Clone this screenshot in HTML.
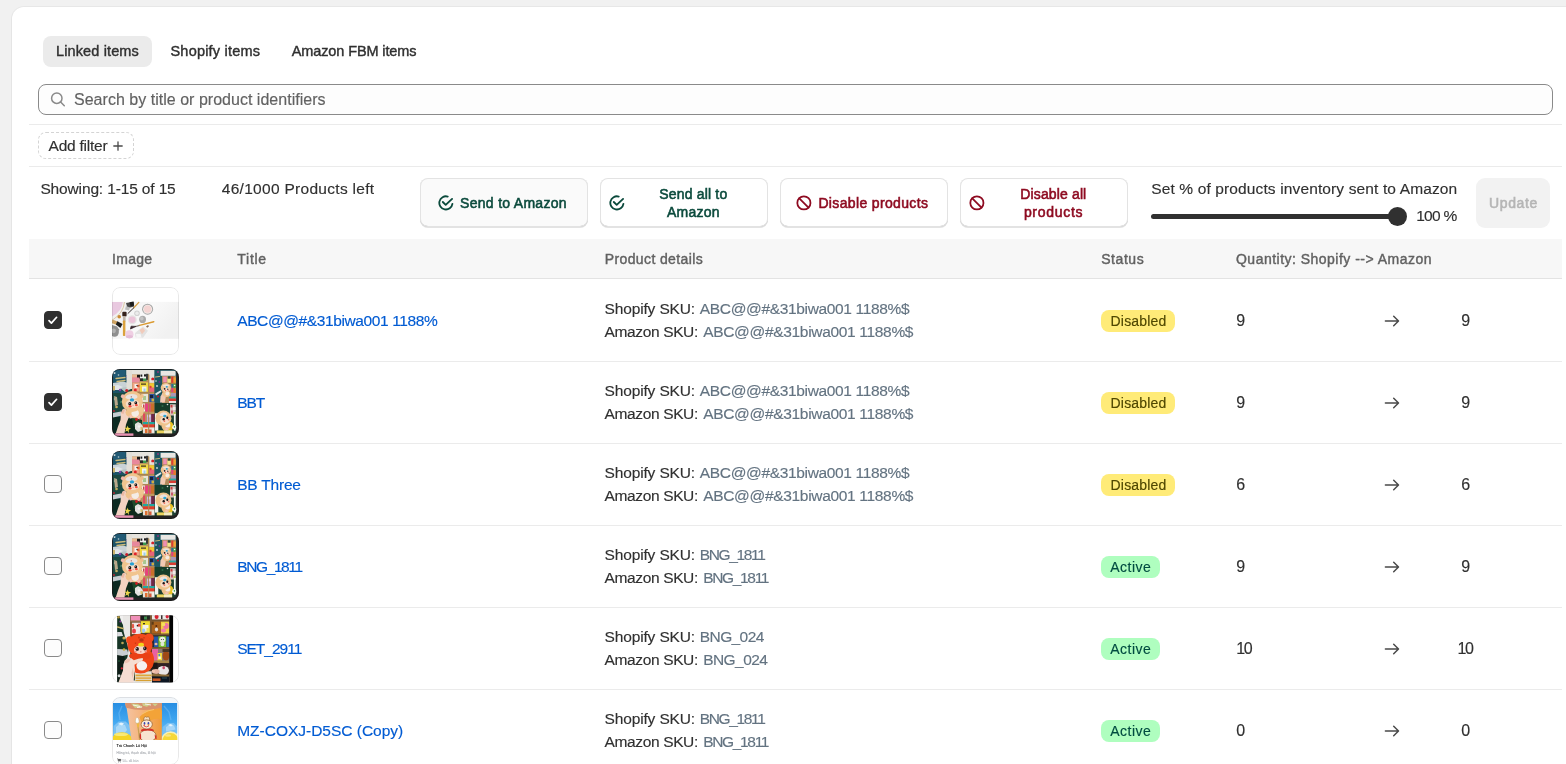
<!DOCTYPE html>
<html lang="en">
<head>
<meta charset="utf-8">
<title>Linked items</title>
<style>
*{box-sizing:border-box;margin:0;padding:0}
html,body{width:1566px;height:764px;overflow:hidden;background:#f1f1f1}
body{font-family:"Liberation Sans",sans-serif;font-size:14px;color:#303030;position:relative}
.wrap{position:absolute;left:0;top:0;width:1566px;height:764px;will-change:transform}
.abs{position:absolute;white-space:nowrap}
.card{position:absolute;left:12px;top:7px;width:1600px;height:800px;background:#fff;border-radius:12px;box-shadow:0 0 0 1px rgba(0,0,0,.04),0 1px 2px rgba(0,0,0,.06)}
.t{position:absolute;white-space:nowrap;line-height:20px;height:20px;-webkit-text-stroke:.15px currentColor}
.med{-webkit-text-stroke:.4px currentColor}
.sb{-webkit-text-stroke:.55px currentColor}
.tab{position:absolute;top:36px;height:31px;border-radius:8px}
.tab.sel{background:#ebebeb}
.hr{position:absolute;left:29px;width:1533px;height:1px;background:#ebebeb}
.search{position:absolute;left:38px;top:84px;width:1515px;height:31px;border:1px solid #8a8a8a;border-radius:8px;background:#fdfdfd}
.addf{position:absolute;left:38px;top:132px;width:96px;height:27px;border:1px dashed #d4d4d4;border-radius:8px}
.btn{position:absolute;top:178px;height:49px;width:168px;border-radius:8px;background:#fff;box-shadow:0 0 0 1px #e3e3e3 inset,0 -1px 0 0 #b5b5b5 inset,0 1px 0 0 #e3e3e3}
.btn.hov{background:#fafafa}
.upd{position:absolute;left:1476px;top:178px;width:74px;height:50px;border-radius:9px;background:#f2f2f2}
.track{position:absolute;left:1151px;top:213.5px;width:248px;height:5px;border-radius:3px;background:#303030}
.knob{position:absolute;left:1388px;top:206.5px;width:19px;height:19px;border-radius:50%;background:#303030}
.thead{position:absolute;left:29px;top:239px;width:1533px;height:40px;background:#f7f7f7;border-bottom:1px solid #e3e3e3}
.row{position:absolute;left:29px;width:1533px;height:82px;border-bottom:1px solid #ebebeb}
.cb{position:absolute;left:44px;width:18px;height:18px;border-radius:4px;border:1px solid #8a8a8a;background:#fdfdfd}
.cb.on{background:#303030;border-color:#303030}
.cb svg{position:absolute;left:-1px;top:-1px}
.thumb{position:absolute;left:112px;width:67px;height:68px;border-radius:8px;overflow:hidden;background:#fff}
.thumb svg{position:absolute;left:0;top:0}
.thumb::after{content:"";position:absolute;left:0;top:0;right:0;bottom:0;border:1px solid rgba(0,0,0,.09);border-radius:8px}
.thumb.collage::after{border-color:rgba(0,0,0,.25)}
.badge{position:absolute;left:1101px;height:22px;border-radius:8px}
.badge.dis{background:#ffeb78;width:74px}
.badge.act{background:#affebf;width:59px}
</style>
</head>
<body>
<div class="wrap">
<svg width="0" height="0" style="position:absolute"><defs><filter id="blur" x="-5%" y="-5%" width="110%" height="110%"><feGaussianBlur stdDeviation=".55"/></filter><filter id="blur2" x="-5%" y="-5%" width="110%" height="110%"><feGaussianBlur stdDeviation=".35"/></filter><clipPath id="clipA"><rect x=".8" y=".8" width="63.600" height="63.800" rx="3.500"/></clipPath><clipPath id="clipR"><rect x="5.100" y=".2" width="56.200" height="67.300" rx="1"/></clipPath></defs></svg>
<div class="card"></div>
<div class="tab sel" style="left:43px;width:109px"></div>
<div class="search"></div>
<svg class="abs" style="left:49px;top:90px" width="18" height="18" viewBox="0 0 18 18"><circle cx="7.8" cy="8.2" r="5.2" fill="none" stroke="#8a8a8a" stroke-width="1.5"/><path d="M11.6 12L15.3 15.8" stroke="#8a8a8a" stroke-width="1.5" stroke-linecap="round"/></svg>
<div class="hr" style="top:124px"></div>
<div class="addf"></div>
<svg class="abs" style="left:113px;top:141px" width="10" height="10" viewBox="0 0 10 10"><path d="M5 .8v8.4M.8 5h8.4" stroke="#4a4a4a" stroke-width="1.3" stroke-linecap="round"/></svg>
<div class="hr" style="top:166px"></div>
<div class="btn hov" style="left:420px"></div>
<div class="btn" style="left:600px"></div>
<div class="btn" style="left:780px"></div>
<div class="btn" style="left:960px"></div>
<svg class="abs" style="left:438px;top:195px" width="15.8" height="15.800" viewBox="0 0 24 24" fill="none" stroke="#0b4a3c" stroke-width="2.800" stroke-linecap="round" stroke-linejoin="round"><path d="M21.900 13.390A10 10 0 1 1 14.760 2.390"/><path d="M7.300 10.600L11.700 15 21.400 5.900"/></svg>
<svg class="abs" style="left:609px;top:195px" width="15.8" height="15.800" viewBox="0 0 24 24" fill="none" stroke="#0b4a3c" stroke-width="2.800" stroke-linecap="round" stroke-linejoin="round"><path d="M21.900 13.390A10 10 0 1 1 14.760 2.390"/><path d="M7.300 10.600L11.700 15 21.400 5.900"/></svg>
<svg class="abs" style="left:796.1px;top:195px" width="15.8" height="15.800" viewBox="0 0 24 24" fill="none" stroke="#8e0b21" stroke-width="2.700" stroke-linecap="round" stroke-linejoin="round"><circle cx="12" cy="12" r="10"/><path d="M5 5l14 14"/></svg>
<svg class="abs" style="left:969.2px;top:195px" width="15.8" height="15.800" viewBox="0 0 24 24" fill="none" stroke="#8e0b21" stroke-width="2.700" stroke-linecap="round" stroke-linejoin="round"><circle cx="12" cy="12" r="10"/><path d="M5 5l14 14"/></svg>
<div class="track"></div><div class="knob"></div>
<div class="upd"></div>
<div class="thead"></div>

<div class="row" style="top:280px"></div>
<div class="cb on" style="top:311px"><svg width="18" height="18" viewBox="0 0 18 18"><path d="M5 9.600l2.400 2.500 5.200-5.800" fill="none" stroke="#fff" stroke-width="1.7" stroke-linecap="round" stroke-linejoin="round"/></svg></div>
<div class="thumb makeup" style="top:287px"><svg width="67" height="68" viewBox="0 0 67 68"><defs><linearGradient id="mkbg" x1="0" y1="0" x2="1" y2=".4"><stop offset="0" stop-color="#ededed"/><stop offset=".55" stop-color="#f9f9f9"/><stop offset="1" stop-color="#f1f1f1"/></linearGradient></defs><rect width="67" height="68" fill="#fff"/><rect x="0" y="14.900" width="67" height="36.900" fill="url(#mkbg)"/><g filter="url(#blur2)"><path d="M0 14.900h10.800q-.5 9-10.800 14.500z" fill="#e9c9e0"/><path d="M12.500 15q-1 11-12 18" fill="none" stroke="#dcc3a0" stroke-width=".9"/><path d="M14 16l7.500-1.200.7 4.800-6.700 1.600z" fill="#4a4a4a"/><path d="M17.500 15.200l4-.6.600 4-3.600.9z" fill="#1f1f1f"/><path d="M14 19l4 1.500-1 3-4-1z" fill="#bdbdbd"/><path d="M26.800 15.400L21.800 20.800" stroke="#d9a24a" stroke-width="1.300" stroke-linecap="round"/><path d="M21.800 20.800L16 26.400" stroke="#3a3030" stroke-width="1" stroke-linecap="round"/><circle cx="35.600" cy="22.200" r="5.500" fill="#a5a5a5"/><circle cx="35.600" cy="22.200" r="4.500" fill="#f3ece9"/><circle cx="35.600" cy="22.200" r="3.600" fill="#f4d4d2"/><circle cx="25" cy="26.300" r="2.800" fill="#d2d2d2"/><circle cx="25" cy="26.300" r="1.700" fill="#ececec"/><circle cx="20.200" cy="32.800" r="4.500" fill="#e6e3e3"/><circle cx="20.200" cy="32.800" r="3.300" fill="#ecc4d9"/><ellipse cx="30.600" cy="32.400" rx="3.400" ry="3.700" fill="#a9a9a9"/><ellipse cx="29.800" cy="31.500" rx="1.800" ry="2" fill="#c4c4c4"/><rect x="10.300" y="24.800" width="4.300" height="4.600" rx="1" fill="#35241f"/><rect x="10.900" y="29.200" width="2.700" height="5" fill="#bfb5aa"/><rect x="10.900" y="33.500" width="2.500" height="15.600" rx=".8" fill="#dba23e"/><circle cx="7.200" cy="29.800" r="1.800" fill="#c98a36"/><path d="M.3 32.500l5.200 2-1 3.200-4.500-1.500z" fill="#cfa463"/><path d="M5.300 34.300l5.300 2.600-2.200 4.200-4.600-3.500z" fill="#1f1f1f"/><path d="M0 38l5 1.500 2.500 3.500-3 1.500-4.500-1z" fill="#8e8e8e"/><ellipse cx="2.600" cy="45" rx="4.300" ry="4.800" fill="#8f8f8f"/><ellipse cx="1.700" cy="43.800" rx="2.200" ry="2.400" fill="#b2b2b2"/><path d="M41.800 34.700L27.500 38.400" stroke="#db9a30" stroke-width="1.400" stroke-linecap="round"/><path d="M27.500 38.400L23.500 39.600" stroke="#8a8078" stroke-width="1.200"/><path d="M24 39.400L18.500 42l.6-2.800z" fill="#3a2830" stroke="#3a2830" stroke-width=".8" stroke-linejoin="round"/><circle cx="17.400" cy="47.300" r="4.100" fill="#efcfe3"/><ellipse cx="17.400" cy="49.600" rx="3.600" ry="1.600" fill="#e4bcd6"/><path d="M23 46l8-6.500 5 4.200-5 7-7.500-.5z" fill="#e3e3e3"/><path d="M27.500 43l3.500-2.300 2 3-3 3.600z" fill="#f1cbbb"/><path d="M34 39.400l2-1.400 1 1.200-1.800 1.500z" fill="#8a6a50"/><path d="M24 47l4.500 0 1 3.500-5 .3z" fill="#f6f6f6"/></g></svg>
</div>
<div class="badge dis" style="top:310px"></div>
<svg class="abs" style="left:1382px;top:311px" width="20" height="20" viewBox="0 0 20 20"><path d="M3.400 10h13M11.700 5.200l4.800 4.800-4.800 4.800" fill="none" stroke="#4a4a4a" stroke-width="1.5" stroke-linecap="round" stroke-linejoin="round"/></svg>
<div class="row" style="top:362px"></div>
<div class="cb on" style="top:393px"><svg width="18" height="18" viewBox="0 0 18 18"><path d="M5 9.600l2.400 2.500 5.200-5.800" fill="none" stroke="#fff" stroke-width="1.7" stroke-linecap="round" stroke-linejoin="round"/></svg></div>
<div class="thumb collage" style="top:369px"><svg width="67" height="68" viewBox="0 0 67 68"><rect width="67" height="68" fill="#222"/><g clip-path="url(#clipA)"><g filter="url(#blur)"><rect x="0" y="0" width="66" height="66" fill="#1d4a48"/><rect x="0" y="0" width="15" height="24" fill="#1f5266"/><path d="M0 0h13v6l-5 3-8-1z" fill="#245a74"/><path d="M13 14l6 1 1 7-6 2-4-3z" fill="#1d4636"/><rect x="0" y="24" width="14" height="20" fill="#1e4a40"/><path d="M0 48h9l4 3 11-1 1 15h-25z" fill="#0f2a20"/><path d="M1 14l10-1.500 7 2 1 3.500-8 1.500-10 .5z" fill="#c9d2d6"/><path d="M0 17l6-1 5 2-4 3-7 0z" fill="#e2e6e8"/><path d="M8 19l8-1 3 2-6 3z" fill="#b8c4c4"/><path d="M4 9.500l9-1M5 12.500l8-1" fill="none" stroke="#cdbb7a" stroke-width="1.3" stroke-linecap="round"/><rect x="0.8" y="17" width="2.2" height="4.5" fill="#c9b26a"/><circle cx="15.5" cy="7.5" r="1.3" fill="#7a3a96"/><circle cx="8" cy="21" r="1.2" fill="#8a44a6"/><circle cx="14.7" cy="21.5" r="1.5" fill="#c81e2c"/><circle cx="16" cy="14.5" r="1" fill="#5a2a7a"/><circle cx="2.5" cy="4" r="1" fill="#dfe8ea"/><circle cx="6.5" cy="6" r="0.8" fill="#b9d0d6"/><circle cx="3" cy="30" r="1.2" fill="#9ab0aa"/><circle cx="4.5" cy="38" r="1.3" fill="#c8b060"/><circle cx="2" cy="42" r="1" fill="#b02030"/><path d="M1 44l8-1.500 1 4-9 2z" fill="#c6ccd0"/><path d="M2 27l3 1 1 8-3 1z" fill="#b9a88a"/><circle cx="9" cy="33" r="1.2" fill="#35705e"/><circle cx="11" cy="28" r="1" fill="#2f6a5a"/><rect x="14.5" y="1" width="30" height="5" fill="#e6e4de"/><rect x="14.5" y="1" width="5.5" height="19" fill="#e2dfd8"/><rect x="20" y="5.5" width="23" height="59" fill="#b89462"/><rect x="20" y="5.8" width="5" height="3" fill="#e8b890"/><rect x="25" y="5.8" width="3.5" height="4" fill="#151515"/><rect x="20" y="8.5" width="7.6" height="5" fill="#e8889c"/><rect x="28" y="4.9" width="6" height="6" fill="#f0f0ee"/><rect x="28.5" y="5.5" width="1.8" height="2.2" fill="#1a1a1a"/><rect x="32" y="5.3" width="2" height="2.2" fill="#1a1a1a"/><rect x="31" y="9.5" width="3.5" height="2.5" fill="#3a9a50"/><rect x="28" y="9.3" width="3" height="2.7" fill="#2a2a2a"/><rect x="34" y="4.8" width="2.3" height="6" fill="#3a3a3a"/><rect x="37.2" y="1.8" width="5.6" height="12" fill="#e8e6e0"/><circle cx="40.8" cy="10" r="1.6" fill="#d42028"/><rect x="39.9" y="11.5" width="1.8" height="2" fill="#e8d8d0"/><rect x="20.5" y="13.8" width="7.1" height="8.6" fill="#f2a486"/><rect x="22.5" y="15" width="3" height="4" fill="#f6eee8"/><circle cx="26.3" cy="17" r="1.3" fill="#e85a2a"/><circle cx="23.3" cy="21" r="1.5" fill="#e0202c"/><circle cx="25" cy="16.5" r="0.7" fill="#2a1a1a"/><rect x="28" y="13.4" width="8" height="9.8" fill="#f0d840"/><rect x="30" y="17.5" width="4.5" height="5" fill="#f4f2ea"/><rect x="31.5" y="19.5" width="2" height="3.5" fill="#9ad0ec"/><rect x="29" y="14.5" width="5" height="1.2" fill="#3a3020"/><rect x="37.2" y="14.2" width="5.4" height="5" fill="#f0c832"/><rect x="37.2" y="18.5" width="5.4" height="4.6" fill="#e8647a"/><circle cx="38.5" cy="18" r="1.2" fill="#e03a3a"/><rect x="20" y="22.8" width="23" height="1.2" fill="#a88450"/><rect x="30" y="25" width="6" height="8" fill="#e6e4d8"/><rect x="31" y="27" width="3" height="4" fill="#a8c890"/><rect x="37.2" y="25" width="5.4" height="8" fill="#2a52a2"/><rect x="38" y="26" width="3" height="3" fill="#18203a"/><rect x="39.5" y="29.5" width="2.5" height="3" fill="#d0b040"/><rect x="29" y="33.4" width="14" height="1.1" fill="#a88450"/><rect x="30" y="34.5" width="3" height="8" fill="#f2efec"/><rect x="31" y="35.5" width="1.5" height="5" fill="#c84848"/><rect x="33.2" y="34.5" width="5.5" height="8.2" fill="#e8407e"/><rect x="38.7" y="34.5" width="3.9" height="8.2" fill="#c8702c"/><rect x="29" y="43" width="14" height="1.2" fill="#c09860"/><rect x="31" y="44.5" width="2.2" height="8" fill="#e24a5a"/><rect x="35" y="45.5" width="4.2" height="7.5" fill="#c2aadc"/><circle cx="37" cy="47" r="1.5" fill="#e8e0f4"/><rect x="39.2" y="45" width="3.6" height="8" fill="#6e2848"/><rect x="31" y="53" width="12" height="2.4" fill="#22a8a0"/><rect x="31" y="55.4" width="12" height="3.1" fill="#e03a2a"/><rect x="31" y="58.5" width="12" height="6.2" fill="#e8e2d8"/><rect x="33" y="60" width="2.5" height="4" fill="#e07030"/><rect x="37" y="60.5" width="2.5" height="3.5" fill="#d85a3a"/><rect x="40.2" y="59.5" width="2" height="4" fill="#f4f0ea"/><rect x="36.1" y="5.8" width="1.1" height="59" fill="#b08850"/><path d="M12.900 50l11-1 6 2 1 14h-18z" fill="#10291c"/><path d="M20 50l6-1 4 4-2 4-6 1z" fill="#1c4a2c"/><circle cx="24.5" cy="50.5" r="1.4" fill="#d01a24"/><circle cx="27.5" cy="50" r="1" fill="#c8242c"/><path d="M23 55l3-2 3 1.500 2 3-1 4-4 1.500-3-3z" fill="#e2e2de"/><circle cx="27" cy="57.5" r="1.2" fill="#f4f4f2"/><rect x="28.5" y="58" width="2" height="3" fill="#d8c070"/><path d="M3.600 65l2.400-7.500 2.500-6.500 .5-7 2-4 2.500-.5 1 3 3.500-3 3 .5-.5 4-4 5-2.500 6.500-1.600 9.500z" fill="#f2d2c2"/><path d="M9 44l2-4 2 .5-1.500 4.500z" fill="#eab8a4"/><ellipse cx="22.5" cy="43.5" rx="9" ry="5.8" fill="#efc28c"/><ellipse cx="29.5" cy="40.5" rx="2.6" ry="2.8" fill="#f0c792"/><ellipse cx="23.2" cy="44.2" rx="3.7" ry="3.7" fill="#f4ece6"/><circle cx="18.7" cy="47.8" r="1.7" fill="#f6c0b4"/><circle cx="26.7" cy="48.3" r="1.7" fill="#f6c0b4"/><circle cx="20.3" cy="32.4" r="10.5" fill="#f1c48e"/><ellipse cx="10.8" cy="27.3" rx="1.9" ry="2.1" fill="#f2b8a8"/><ellipse cx="30" cy="27" rx="1.8" ry="2" fill="#eebf8a"/><path d="M13.400 28.500q1-3.500 6.500-3.500 5.200 0 5.600 2.800 .2 2.300-5.800 2.500-5.500 .2-6.300-1.800z" fill="#ebe3de"/><circle cx="19.3" cy="27.8" r="0.6" fill="#a04848"/><ellipse cx="20.5" cy="34.8" rx="6.8" ry="4.3" fill="#f7dcc8"/><ellipse cx="20" cy="30.9" rx="2.2" ry="1.7" fill="#28a0d2"/><ellipse cx="17.8" cy="34.8" rx="1.5" ry="1.7" fill="#1a1416"/><ellipse cx="23.8" cy="33.8" rx="1.4" ry="1.6" fill="#1a1416"/><circle cx="17.3" cy="34.3" r="0.45" fill="#fff"/><circle cx="23.3" cy="33.3" r="0.45" fill="#fff"/><ellipse cx="18" cy="37.3" rx="1.5" ry="1.2" fill="#ef4a3a"/><ellipse cx="24.4" cy="36.2" rx="1.4" ry="1.1" fill="#ef4a3a"/><ellipse cx="21.2" cy="36.3" rx="0.9" ry="0.6" fill="#f0a0a0"/><path d="M15.400 56.500l1 2.300 2.600.6-2.300 1.300.2 3.300-1.600-2.200-2.400.9 1.300-2.300-1.600-1.900 2.400.2z" fill="#ecd64c"/><rect x="42.6" y="0" width="22" height="34" fill="#1f5560"/><rect x="42.6" y="34" width="22" height="31" fill="#1a4030"/><path d="M42.600 1h5l1 8-2 10 2 14h-6z" fill="#1f5762"/><path d="M43.200 24.500l5.500-3.300.8 1.500-5.500 3.800z" fill="#dfe5e6"/><path d="M43.500 8l4-.5" fill="none" stroke="#c8b878" stroke-width="1" stroke-linecap="round"/><circle cx="46" cy="3" r="0.9" fill="#a03080"/><circle cx="47.5" cy="13" r="0.9" fill="#6a2a8a"/><circle cx="46" cy="27.5" r="1.1" fill="#c01a2a"/><circle cx="44" cy="12" r="0.8" fill="#d8e2e4"/><circle cx="45" cy="17" r="0.9" fill="#cfdcde"/><rect x="48.6" y="1.8" width="15" height="5" fill="#e9e7e3"/><rect x="50" y="7" width="14" height="27" fill="#b08a5c"/><rect x="51.2" y="7.6" width="3.6" height="5.8" fill="#f08fb0"/><rect x="55.3" y="9.6" width="3.5" height="4.2" fill="#f2e48a"/><rect x="56" y="7.3" width="2.5" height="2.3" fill="#2a4a3a"/><rect x="59.3" y="7.6" width="2.2" height="6.2" fill="#e03c2e"/><rect x="61.5" y="8.5" width="2.3" height="5.3" fill="#f2a630"/><rect x="50" y="13.9" width="14" height="0.9" fill="#9a7a48"/><rect x="59.3" y="15" width="2.2" height="3.7" fill="#2a6a9a"/><rect x="61.5" y="15" width="2.3" height="3.7" fill="#3ea642"/><circle cx="62.6" cy="16.5" r="0.8" fill="#f0f4f0"/><rect x="59.3" y="19" width="2.2" height="4" fill="#e0407e"/><rect x="61.5" y="19.5" width="2.3" height="4.5" fill="#e8782a"/><rect x="58.8" y="24" width="5" height="4.5" fill="#a896b6"/><rect x="57" y="27.6" width="7" height="2" fill="#2aa8a0"/><rect x="57" y="29.6" width="7" height="2.5" fill="#d83a30"/><rect x="57" y="32" width="7" height="2" fill="#e8e2dc"/><path d="M48.100 33.500l.4-6 2-3.500 3.500.5-.3 4-1 5z" fill="#f2cab4"/><ellipse cx="54.6" cy="25" rx="3.9" ry="2.9" fill="#efc38e"/><ellipse cx="55.3" cy="24.5" rx="1.9" ry="1.9" fill="#f4ece6"/><ellipse cx="53.8" cy="18.7" rx="5.1" ry="4.6" fill="#f0c48e"/><path d="M50.500 16.800q1.500-1.800 4-1.600 2.500 .2 3 1.600-1.500 1-3.500 1-2.500 0-3.500-1z" fill="#ebe3de"/><ellipse cx="54.3" cy="20.5" rx="3.2" ry="2.2" fill="#f7dcc8"/><ellipse cx="54.8" cy="17.8" rx="1.1" ry="0.9" fill="#28a0d2"/><circle cx="52.6" cy="19.8" r="0.85" fill="#1a1416"/><circle cx="55.8" cy="20.2" r="0.75" fill="#3a2a2a"/><circle cx="53.5" cy="21.5" r="0.7" fill="#ef5a4a"/><circle cx="56.3" cy="21.2" r="0.7" fill="#f08a7a"/><path d="M42.800 34h15.200v6l-4 2-7-1-4.200 2z" fill="#183c2c"/><rect x="58" y="35.3" width="5.7" height="11.2" fill="#d9c2c0"/><rect x="58.5" y="36" width="2" height="2.5" fill="#c83a3a"/><rect x="61" y="38" width="2.5" height="3" fill="#f0ece8"/><rect x="59" y="41.5" width="2" height="3" fill="#c85a6a"/><rect x="61.5" y="43" width="2" height="3" fill="#b8c850"/><circle cx="50.5" cy="37" r="1" fill="#2f6a48"/><circle cx="55.5" cy="35.5" r="0.8" fill="#d8e0dc"/><rect x="43" y="44.2" width="3.3" height="17.4" fill="#f1f1ee"/><rect x="61.9" y="45" width="1.8" height="16.6" fill="#f5f5f1"/><ellipse cx="57.8" cy="57.3" rx="3.7" ry="4.6" fill="#e9c222"/><ellipse cx="54" cy="57.3" rx="4.4" ry="4.2" fill="#eec08a"/><circle cx="55.7" cy="55.8" r="2.6" fill="#f4ece6"/><circle cx="54.5" cy="60.3" r="1.3" fill="#f6c0b4"/><ellipse cx="51.4" cy="49.3" rx="8" ry="7.8" fill="#efc38c"/><path d="M47.200 45.800q1.500-2.600 4.500-2.600t3.800 2q-.5 1.900-4 2.100t-4.300-1.500z" fill="#ebe3de"/><ellipse cx="53" cy="51" rx="4.7" ry="3.5" fill="#f7dcc8"/><ellipse cx="52.8" cy="47.1" rx="1.6" ry="1.3" fill="#2ea6d6"/><ellipse cx="51.7" cy="50.2" rx="1.15" ry="1.3" fill="#1a1416"/><ellipse cx="55.3" cy="48.8" rx="1.05" ry="1.2" fill="#1a1416"/><circle cx="52.4" cy="52.1" r="0.9" fill="#f06a5a"/><circle cx="56.5" cy="50.6" r="0.9" fill="#f07a6a"/><rect x="44.8" y="61.4" width="15.3" height="3.3" fill="#ecd45e"/><rect x="52" y="61.4" width="8.1" height="3.3" fill="#f3ecc4"/><circle cx="62.4" cy="58.3" r="2.2" fill="#f8f8f4"/><circle cx="62.4" cy="57.9" r="0.8" fill="#32a048"/></g></g><rect x="2.700" y="64.400" width="18.700" height="2.400" fill="#e892b2" filter="url(#blur2)"/></svg></div>
<div class="badge dis" style="top:392px"></div>
<svg class="abs" style="left:1382px;top:393px" width="20" height="20" viewBox="0 0 20 20"><path d="M3.400 10h13M11.700 5.200l4.800 4.800-4.800 4.800" fill="none" stroke="#4a4a4a" stroke-width="1.5" stroke-linecap="round" stroke-linejoin="round"/></svg>
<div class="row" style="top:444px"></div>
<div class="cb" style="top:475px"></div>
<div class="thumb collage" style="top:451px"><svg width="67" height="68" viewBox="0 0 67 68"><rect width="67" height="68" fill="#222"/><g clip-path="url(#clipA)"><g filter="url(#blur)"><rect x="0" y="0" width="66" height="66" fill="#1d4a48"/><rect x="0" y="0" width="15" height="24" fill="#1f5266"/><path d="M0 0h13v6l-5 3-8-1z" fill="#245a74"/><path d="M13 14l6 1 1 7-6 2-4-3z" fill="#1d4636"/><rect x="0" y="24" width="14" height="20" fill="#1e4a40"/><path d="M0 48h9l4 3 11-1 1 15h-25z" fill="#0f2a20"/><path d="M1 14l10-1.500 7 2 1 3.500-8 1.500-10 .5z" fill="#c9d2d6"/><path d="M0 17l6-1 5 2-4 3-7 0z" fill="#e2e6e8"/><path d="M8 19l8-1 3 2-6 3z" fill="#b8c4c4"/><path d="M4 9.500l9-1M5 12.500l8-1" fill="none" stroke="#cdbb7a" stroke-width="1.3" stroke-linecap="round"/><rect x="0.8" y="17" width="2.2" height="4.5" fill="#c9b26a"/><circle cx="15.5" cy="7.5" r="1.3" fill="#7a3a96"/><circle cx="8" cy="21" r="1.2" fill="#8a44a6"/><circle cx="14.7" cy="21.5" r="1.5" fill="#c81e2c"/><circle cx="16" cy="14.5" r="1" fill="#5a2a7a"/><circle cx="2.5" cy="4" r="1" fill="#dfe8ea"/><circle cx="6.5" cy="6" r="0.8" fill="#b9d0d6"/><circle cx="3" cy="30" r="1.2" fill="#9ab0aa"/><circle cx="4.5" cy="38" r="1.3" fill="#c8b060"/><circle cx="2" cy="42" r="1" fill="#b02030"/><path d="M1 44l8-1.500 1 4-9 2z" fill="#c6ccd0"/><path d="M2 27l3 1 1 8-3 1z" fill="#b9a88a"/><circle cx="9" cy="33" r="1.2" fill="#35705e"/><circle cx="11" cy="28" r="1" fill="#2f6a5a"/><rect x="14.5" y="1" width="30" height="5" fill="#e6e4de"/><rect x="14.5" y="1" width="5.5" height="19" fill="#e2dfd8"/><rect x="20" y="5.5" width="23" height="59" fill="#b89462"/><rect x="20" y="5.8" width="5" height="3" fill="#e8b890"/><rect x="25" y="5.8" width="3.5" height="4" fill="#151515"/><rect x="20" y="8.5" width="7.6" height="5" fill="#e8889c"/><rect x="28" y="4.9" width="6" height="6" fill="#f0f0ee"/><rect x="28.5" y="5.5" width="1.8" height="2.2" fill="#1a1a1a"/><rect x="32" y="5.3" width="2" height="2.2" fill="#1a1a1a"/><rect x="31" y="9.5" width="3.5" height="2.5" fill="#3a9a50"/><rect x="28" y="9.3" width="3" height="2.7" fill="#2a2a2a"/><rect x="34" y="4.8" width="2.3" height="6" fill="#3a3a3a"/><rect x="37.2" y="1.8" width="5.6" height="12" fill="#e8e6e0"/><circle cx="40.8" cy="10" r="1.6" fill="#d42028"/><rect x="39.9" y="11.5" width="1.8" height="2" fill="#e8d8d0"/><rect x="20.5" y="13.8" width="7.1" height="8.6" fill="#f2a486"/><rect x="22.5" y="15" width="3" height="4" fill="#f6eee8"/><circle cx="26.3" cy="17" r="1.3" fill="#e85a2a"/><circle cx="23.3" cy="21" r="1.5" fill="#e0202c"/><circle cx="25" cy="16.5" r="0.7" fill="#2a1a1a"/><rect x="28" y="13.4" width="8" height="9.8" fill="#f0d840"/><rect x="30" y="17.5" width="4.5" height="5" fill="#f4f2ea"/><rect x="31.5" y="19.5" width="2" height="3.5" fill="#9ad0ec"/><rect x="29" y="14.5" width="5" height="1.2" fill="#3a3020"/><rect x="37.2" y="14.2" width="5.4" height="5" fill="#f0c832"/><rect x="37.2" y="18.5" width="5.4" height="4.6" fill="#e8647a"/><circle cx="38.5" cy="18" r="1.2" fill="#e03a3a"/><rect x="20" y="22.8" width="23" height="1.2" fill="#a88450"/><rect x="30" y="25" width="6" height="8" fill="#e6e4d8"/><rect x="31" y="27" width="3" height="4" fill="#a8c890"/><rect x="37.2" y="25" width="5.4" height="8" fill="#2a52a2"/><rect x="38" y="26" width="3" height="3" fill="#18203a"/><rect x="39.5" y="29.5" width="2.5" height="3" fill="#d0b040"/><rect x="29" y="33.4" width="14" height="1.1" fill="#a88450"/><rect x="30" y="34.5" width="3" height="8" fill="#f2efec"/><rect x="31" y="35.5" width="1.5" height="5" fill="#c84848"/><rect x="33.2" y="34.5" width="5.5" height="8.2" fill="#e8407e"/><rect x="38.7" y="34.5" width="3.9" height="8.2" fill="#c8702c"/><rect x="29" y="43" width="14" height="1.2" fill="#c09860"/><rect x="31" y="44.5" width="2.2" height="8" fill="#e24a5a"/><rect x="35" y="45.5" width="4.2" height="7.5" fill="#c2aadc"/><circle cx="37" cy="47" r="1.5" fill="#e8e0f4"/><rect x="39.2" y="45" width="3.6" height="8" fill="#6e2848"/><rect x="31" y="53" width="12" height="2.4" fill="#22a8a0"/><rect x="31" y="55.4" width="12" height="3.1" fill="#e03a2a"/><rect x="31" y="58.5" width="12" height="6.2" fill="#e8e2d8"/><rect x="33" y="60" width="2.5" height="4" fill="#e07030"/><rect x="37" y="60.5" width="2.5" height="3.5" fill="#d85a3a"/><rect x="40.2" y="59.5" width="2" height="4" fill="#f4f0ea"/><rect x="36.1" y="5.8" width="1.1" height="59" fill="#b08850"/><path d="M12.900 50l11-1 6 2 1 14h-18z" fill="#10291c"/><path d="M20 50l6-1 4 4-2 4-6 1z" fill="#1c4a2c"/><circle cx="24.5" cy="50.5" r="1.4" fill="#d01a24"/><circle cx="27.5" cy="50" r="1" fill="#c8242c"/><path d="M23 55l3-2 3 1.500 2 3-1 4-4 1.500-3-3z" fill="#e2e2de"/><circle cx="27" cy="57.5" r="1.2" fill="#f4f4f2"/><rect x="28.5" y="58" width="2" height="3" fill="#d8c070"/><path d="M3.600 65l2.400-7.500 2.500-6.500 .5-7 2-4 2.500-.5 1 3 3.500-3 3 .5-.5 4-4 5-2.500 6.500-1.600 9.500z" fill="#f2d2c2"/><path d="M9 44l2-4 2 .5-1.500 4.500z" fill="#eab8a4"/><ellipse cx="22.5" cy="43.5" rx="9" ry="5.8" fill="#efc28c"/><ellipse cx="29.5" cy="40.5" rx="2.6" ry="2.8" fill="#f0c792"/><ellipse cx="23.2" cy="44.2" rx="3.7" ry="3.7" fill="#f4ece6"/><circle cx="18.7" cy="47.8" r="1.7" fill="#f6c0b4"/><circle cx="26.7" cy="48.3" r="1.7" fill="#f6c0b4"/><circle cx="20.3" cy="32.4" r="10.5" fill="#f1c48e"/><ellipse cx="10.8" cy="27.3" rx="1.9" ry="2.1" fill="#f2b8a8"/><ellipse cx="30" cy="27" rx="1.8" ry="2" fill="#eebf8a"/><path d="M13.400 28.500q1-3.500 6.500-3.500 5.200 0 5.600 2.800 .2 2.300-5.800 2.500-5.500 .2-6.300-1.800z" fill="#ebe3de"/><circle cx="19.3" cy="27.8" r="0.6" fill="#a04848"/><ellipse cx="20.5" cy="34.8" rx="6.8" ry="4.3" fill="#f7dcc8"/><ellipse cx="20" cy="30.9" rx="2.2" ry="1.7" fill="#28a0d2"/><ellipse cx="17.8" cy="34.8" rx="1.5" ry="1.7" fill="#1a1416"/><ellipse cx="23.8" cy="33.8" rx="1.4" ry="1.6" fill="#1a1416"/><circle cx="17.3" cy="34.3" r="0.45" fill="#fff"/><circle cx="23.3" cy="33.3" r="0.45" fill="#fff"/><ellipse cx="18" cy="37.3" rx="1.5" ry="1.2" fill="#ef4a3a"/><ellipse cx="24.4" cy="36.2" rx="1.4" ry="1.1" fill="#ef4a3a"/><ellipse cx="21.2" cy="36.3" rx="0.9" ry="0.6" fill="#f0a0a0"/><path d="M15.400 56.500l1 2.300 2.600.6-2.300 1.300.2 3.300-1.600-2.200-2.400.9 1.300-2.300-1.600-1.900 2.400.2z" fill="#ecd64c"/><rect x="42.6" y="0" width="22" height="34" fill="#1f5560"/><rect x="42.6" y="34" width="22" height="31" fill="#1a4030"/><path d="M42.600 1h5l1 8-2 10 2 14h-6z" fill="#1f5762"/><path d="M43.200 24.500l5.500-3.300.8 1.500-5.500 3.800z" fill="#dfe5e6"/><path d="M43.500 8l4-.5" fill="none" stroke="#c8b878" stroke-width="1" stroke-linecap="round"/><circle cx="46" cy="3" r="0.9" fill="#a03080"/><circle cx="47.5" cy="13" r="0.9" fill="#6a2a8a"/><circle cx="46" cy="27.5" r="1.1" fill="#c01a2a"/><circle cx="44" cy="12" r="0.8" fill="#d8e2e4"/><circle cx="45" cy="17" r="0.9" fill="#cfdcde"/><rect x="48.6" y="1.8" width="15" height="5" fill="#e9e7e3"/><rect x="50" y="7" width="14" height="27" fill="#b08a5c"/><rect x="51.2" y="7.6" width="3.6" height="5.8" fill="#f08fb0"/><rect x="55.3" y="9.6" width="3.5" height="4.2" fill="#f2e48a"/><rect x="56" y="7.3" width="2.5" height="2.3" fill="#2a4a3a"/><rect x="59.3" y="7.6" width="2.2" height="6.2" fill="#e03c2e"/><rect x="61.5" y="8.5" width="2.3" height="5.3" fill="#f2a630"/><rect x="50" y="13.9" width="14" height="0.9" fill="#9a7a48"/><rect x="59.3" y="15" width="2.2" height="3.7" fill="#2a6a9a"/><rect x="61.5" y="15" width="2.3" height="3.7" fill="#3ea642"/><circle cx="62.6" cy="16.5" r="0.8" fill="#f0f4f0"/><rect x="59.3" y="19" width="2.2" height="4" fill="#e0407e"/><rect x="61.5" y="19.5" width="2.3" height="4.5" fill="#e8782a"/><rect x="58.8" y="24" width="5" height="4.5" fill="#a896b6"/><rect x="57" y="27.6" width="7" height="2" fill="#2aa8a0"/><rect x="57" y="29.6" width="7" height="2.5" fill="#d83a30"/><rect x="57" y="32" width="7" height="2" fill="#e8e2dc"/><path d="M48.100 33.500l.4-6 2-3.500 3.500.5-.3 4-1 5z" fill="#f2cab4"/><ellipse cx="54.6" cy="25" rx="3.9" ry="2.9" fill="#efc38e"/><ellipse cx="55.3" cy="24.5" rx="1.9" ry="1.9" fill="#f4ece6"/><ellipse cx="53.8" cy="18.7" rx="5.1" ry="4.6" fill="#f0c48e"/><path d="M50.500 16.800q1.500-1.800 4-1.600 2.500 .2 3 1.600-1.500 1-3.500 1-2.500 0-3.500-1z" fill="#ebe3de"/><ellipse cx="54.3" cy="20.5" rx="3.2" ry="2.2" fill="#f7dcc8"/><ellipse cx="54.8" cy="17.8" rx="1.1" ry="0.9" fill="#28a0d2"/><circle cx="52.6" cy="19.8" r="0.85" fill="#1a1416"/><circle cx="55.8" cy="20.2" r="0.75" fill="#3a2a2a"/><circle cx="53.5" cy="21.5" r="0.7" fill="#ef5a4a"/><circle cx="56.3" cy="21.2" r="0.7" fill="#f08a7a"/><path d="M42.800 34h15.200v6l-4 2-7-1-4.200 2z" fill="#183c2c"/><rect x="58" y="35.3" width="5.7" height="11.2" fill="#d9c2c0"/><rect x="58.5" y="36" width="2" height="2.5" fill="#c83a3a"/><rect x="61" y="38" width="2.5" height="3" fill="#f0ece8"/><rect x="59" y="41.5" width="2" height="3" fill="#c85a6a"/><rect x="61.5" y="43" width="2" height="3" fill="#b8c850"/><circle cx="50.5" cy="37" r="1" fill="#2f6a48"/><circle cx="55.5" cy="35.5" r="0.8" fill="#d8e0dc"/><rect x="43" y="44.2" width="3.3" height="17.4" fill="#f1f1ee"/><rect x="61.9" y="45" width="1.8" height="16.6" fill="#f5f5f1"/><ellipse cx="57.8" cy="57.3" rx="3.7" ry="4.6" fill="#e9c222"/><ellipse cx="54" cy="57.3" rx="4.4" ry="4.2" fill="#eec08a"/><circle cx="55.7" cy="55.8" r="2.6" fill="#f4ece6"/><circle cx="54.5" cy="60.3" r="1.3" fill="#f6c0b4"/><ellipse cx="51.4" cy="49.3" rx="8" ry="7.8" fill="#efc38c"/><path d="M47.200 45.800q1.500-2.600 4.500-2.600t3.800 2q-.5 1.900-4 2.100t-4.300-1.500z" fill="#ebe3de"/><ellipse cx="53" cy="51" rx="4.7" ry="3.5" fill="#f7dcc8"/><ellipse cx="52.8" cy="47.1" rx="1.6" ry="1.3" fill="#2ea6d6"/><ellipse cx="51.7" cy="50.2" rx="1.15" ry="1.3" fill="#1a1416"/><ellipse cx="55.3" cy="48.8" rx="1.05" ry="1.2" fill="#1a1416"/><circle cx="52.4" cy="52.1" r="0.9" fill="#f06a5a"/><circle cx="56.5" cy="50.6" r="0.9" fill="#f07a6a"/><rect x="44.8" y="61.4" width="15.3" height="3.3" fill="#ecd45e"/><rect x="52" y="61.4" width="8.1" height="3.3" fill="#f3ecc4"/><circle cx="62.4" cy="58.3" r="2.2" fill="#f8f8f4"/><circle cx="62.4" cy="57.9" r="0.8" fill="#32a048"/></g></g><rect x="2.700" y="64.400" width="18.700" height="2.400" fill="#e892b2" filter="url(#blur2)"/></svg></div>
<div class="badge dis" style="top:474px"></div>
<svg class="abs" style="left:1382px;top:475px" width="20" height="20" viewBox="0 0 20 20"><path d="M3.400 10h13M11.700 5.200l4.800 4.800-4.800 4.800" fill="none" stroke="#4a4a4a" stroke-width="1.5" stroke-linecap="round" stroke-linejoin="round"/></svg>
<div class="row" style="top:526px"></div>
<div class="cb" style="top:557px"></div>
<div class="thumb collage" style="top:533px"><svg width="67" height="68" viewBox="0 0 67 68"><rect width="67" height="68" fill="#222"/><g clip-path="url(#clipA)"><g filter="url(#blur)"><rect x="0" y="0" width="66" height="66" fill="#1d4a48"/><rect x="0" y="0" width="15" height="24" fill="#1f5266"/><path d="M0 0h13v6l-5 3-8-1z" fill="#245a74"/><path d="M13 14l6 1 1 7-6 2-4-3z" fill="#1d4636"/><rect x="0" y="24" width="14" height="20" fill="#1e4a40"/><path d="M0 48h9l4 3 11-1 1 15h-25z" fill="#0f2a20"/><path d="M1 14l10-1.500 7 2 1 3.500-8 1.500-10 .5z" fill="#c9d2d6"/><path d="M0 17l6-1 5 2-4 3-7 0z" fill="#e2e6e8"/><path d="M8 19l8-1 3 2-6 3z" fill="#b8c4c4"/><path d="M4 9.500l9-1M5 12.500l8-1" fill="none" stroke="#cdbb7a" stroke-width="1.3" stroke-linecap="round"/><rect x="0.8" y="17" width="2.2" height="4.5" fill="#c9b26a"/><circle cx="15.5" cy="7.5" r="1.3" fill="#7a3a96"/><circle cx="8" cy="21" r="1.2" fill="#8a44a6"/><circle cx="14.7" cy="21.5" r="1.5" fill="#c81e2c"/><circle cx="16" cy="14.5" r="1" fill="#5a2a7a"/><circle cx="2.5" cy="4" r="1" fill="#dfe8ea"/><circle cx="6.5" cy="6" r="0.8" fill="#b9d0d6"/><circle cx="3" cy="30" r="1.2" fill="#9ab0aa"/><circle cx="4.5" cy="38" r="1.3" fill="#c8b060"/><circle cx="2" cy="42" r="1" fill="#b02030"/><path d="M1 44l8-1.500 1 4-9 2z" fill="#c6ccd0"/><path d="M2 27l3 1 1 8-3 1z" fill="#b9a88a"/><circle cx="9" cy="33" r="1.2" fill="#35705e"/><circle cx="11" cy="28" r="1" fill="#2f6a5a"/><rect x="14.5" y="1" width="30" height="5" fill="#e6e4de"/><rect x="14.5" y="1" width="5.5" height="19" fill="#e2dfd8"/><rect x="20" y="5.5" width="23" height="59" fill="#b89462"/><rect x="20" y="5.8" width="5" height="3" fill="#e8b890"/><rect x="25" y="5.8" width="3.5" height="4" fill="#151515"/><rect x="20" y="8.5" width="7.6" height="5" fill="#e8889c"/><rect x="28" y="4.9" width="6" height="6" fill="#f0f0ee"/><rect x="28.5" y="5.5" width="1.8" height="2.2" fill="#1a1a1a"/><rect x="32" y="5.3" width="2" height="2.2" fill="#1a1a1a"/><rect x="31" y="9.5" width="3.5" height="2.5" fill="#3a9a50"/><rect x="28" y="9.3" width="3" height="2.7" fill="#2a2a2a"/><rect x="34" y="4.8" width="2.3" height="6" fill="#3a3a3a"/><rect x="37.2" y="1.8" width="5.6" height="12" fill="#e8e6e0"/><circle cx="40.8" cy="10" r="1.6" fill="#d42028"/><rect x="39.9" y="11.5" width="1.8" height="2" fill="#e8d8d0"/><rect x="20.5" y="13.8" width="7.1" height="8.6" fill="#f2a486"/><rect x="22.5" y="15" width="3" height="4" fill="#f6eee8"/><circle cx="26.3" cy="17" r="1.3" fill="#e85a2a"/><circle cx="23.3" cy="21" r="1.5" fill="#e0202c"/><circle cx="25" cy="16.5" r="0.7" fill="#2a1a1a"/><rect x="28" y="13.4" width="8" height="9.8" fill="#f0d840"/><rect x="30" y="17.5" width="4.5" height="5" fill="#f4f2ea"/><rect x="31.5" y="19.5" width="2" height="3.5" fill="#9ad0ec"/><rect x="29" y="14.5" width="5" height="1.2" fill="#3a3020"/><rect x="37.2" y="14.2" width="5.4" height="5" fill="#f0c832"/><rect x="37.2" y="18.5" width="5.4" height="4.6" fill="#e8647a"/><circle cx="38.5" cy="18" r="1.2" fill="#e03a3a"/><rect x="20" y="22.8" width="23" height="1.2" fill="#a88450"/><rect x="30" y="25" width="6" height="8" fill="#e6e4d8"/><rect x="31" y="27" width="3" height="4" fill="#a8c890"/><rect x="37.2" y="25" width="5.4" height="8" fill="#2a52a2"/><rect x="38" y="26" width="3" height="3" fill="#18203a"/><rect x="39.5" y="29.5" width="2.5" height="3" fill="#d0b040"/><rect x="29" y="33.4" width="14" height="1.1" fill="#a88450"/><rect x="30" y="34.5" width="3" height="8" fill="#f2efec"/><rect x="31" y="35.5" width="1.5" height="5" fill="#c84848"/><rect x="33.2" y="34.5" width="5.5" height="8.2" fill="#e8407e"/><rect x="38.7" y="34.5" width="3.9" height="8.2" fill="#c8702c"/><rect x="29" y="43" width="14" height="1.2" fill="#c09860"/><rect x="31" y="44.5" width="2.2" height="8" fill="#e24a5a"/><rect x="35" y="45.5" width="4.2" height="7.5" fill="#c2aadc"/><circle cx="37" cy="47" r="1.5" fill="#e8e0f4"/><rect x="39.2" y="45" width="3.6" height="8" fill="#6e2848"/><rect x="31" y="53" width="12" height="2.4" fill="#22a8a0"/><rect x="31" y="55.4" width="12" height="3.1" fill="#e03a2a"/><rect x="31" y="58.5" width="12" height="6.2" fill="#e8e2d8"/><rect x="33" y="60" width="2.5" height="4" fill="#e07030"/><rect x="37" y="60.5" width="2.5" height="3.5" fill="#d85a3a"/><rect x="40.2" y="59.5" width="2" height="4" fill="#f4f0ea"/><rect x="36.1" y="5.8" width="1.1" height="59" fill="#b08850"/><path d="M12.900 50l11-1 6 2 1 14h-18z" fill="#10291c"/><path d="M20 50l6-1 4 4-2 4-6 1z" fill="#1c4a2c"/><circle cx="24.5" cy="50.5" r="1.4" fill="#d01a24"/><circle cx="27.5" cy="50" r="1" fill="#c8242c"/><path d="M23 55l3-2 3 1.500 2 3-1 4-4 1.500-3-3z" fill="#e2e2de"/><circle cx="27" cy="57.5" r="1.2" fill="#f4f4f2"/><rect x="28.5" y="58" width="2" height="3" fill="#d8c070"/><path d="M3.600 65l2.400-7.500 2.500-6.500 .5-7 2-4 2.500-.5 1 3 3.500-3 3 .5-.5 4-4 5-2.500 6.500-1.600 9.500z" fill="#f2d2c2"/><path d="M9 44l2-4 2 .5-1.500 4.500z" fill="#eab8a4"/><ellipse cx="22.5" cy="43.5" rx="9" ry="5.8" fill="#efc28c"/><ellipse cx="29.5" cy="40.5" rx="2.6" ry="2.8" fill="#f0c792"/><ellipse cx="23.2" cy="44.2" rx="3.7" ry="3.7" fill="#f4ece6"/><circle cx="18.7" cy="47.8" r="1.7" fill="#f6c0b4"/><circle cx="26.7" cy="48.3" r="1.7" fill="#f6c0b4"/><circle cx="20.3" cy="32.4" r="10.5" fill="#f1c48e"/><ellipse cx="10.8" cy="27.3" rx="1.9" ry="2.1" fill="#f2b8a8"/><ellipse cx="30" cy="27" rx="1.8" ry="2" fill="#eebf8a"/><path d="M13.400 28.500q1-3.500 6.500-3.500 5.200 0 5.600 2.800 .2 2.300-5.800 2.500-5.500 .2-6.300-1.800z" fill="#ebe3de"/><circle cx="19.3" cy="27.8" r="0.6" fill="#a04848"/><ellipse cx="20.5" cy="34.8" rx="6.8" ry="4.3" fill="#f7dcc8"/><ellipse cx="20" cy="30.9" rx="2.2" ry="1.7" fill="#28a0d2"/><ellipse cx="17.8" cy="34.8" rx="1.5" ry="1.7" fill="#1a1416"/><ellipse cx="23.8" cy="33.8" rx="1.4" ry="1.6" fill="#1a1416"/><circle cx="17.3" cy="34.3" r="0.45" fill="#fff"/><circle cx="23.3" cy="33.3" r="0.45" fill="#fff"/><ellipse cx="18" cy="37.3" rx="1.5" ry="1.2" fill="#ef4a3a"/><ellipse cx="24.4" cy="36.2" rx="1.4" ry="1.1" fill="#ef4a3a"/><ellipse cx="21.2" cy="36.3" rx="0.9" ry="0.6" fill="#f0a0a0"/><path d="M15.400 56.500l1 2.300 2.600.6-2.300 1.300.2 3.300-1.600-2.200-2.400.9 1.300-2.300-1.600-1.900 2.400.2z" fill="#ecd64c"/><rect x="42.6" y="0" width="22" height="34" fill="#1f5560"/><rect x="42.6" y="34" width="22" height="31" fill="#1a4030"/><path d="M42.600 1h5l1 8-2 10 2 14h-6z" fill="#1f5762"/><path d="M43.200 24.500l5.500-3.300.8 1.500-5.500 3.800z" fill="#dfe5e6"/><path d="M43.500 8l4-.5" fill="none" stroke="#c8b878" stroke-width="1" stroke-linecap="round"/><circle cx="46" cy="3" r="0.9" fill="#a03080"/><circle cx="47.5" cy="13" r="0.9" fill="#6a2a8a"/><circle cx="46" cy="27.5" r="1.1" fill="#c01a2a"/><circle cx="44" cy="12" r="0.8" fill="#d8e2e4"/><circle cx="45" cy="17" r="0.9" fill="#cfdcde"/><rect x="48.6" y="1.8" width="15" height="5" fill="#e9e7e3"/><rect x="50" y="7" width="14" height="27" fill="#b08a5c"/><rect x="51.2" y="7.6" width="3.6" height="5.8" fill="#f08fb0"/><rect x="55.3" y="9.6" width="3.5" height="4.2" fill="#f2e48a"/><rect x="56" y="7.3" width="2.5" height="2.3" fill="#2a4a3a"/><rect x="59.3" y="7.6" width="2.2" height="6.2" fill="#e03c2e"/><rect x="61.5" y="8.5" width="2.3" height="5.3" fill="#f2a630"/><rect x="50" y="13.9" width="14" height="0.9" fill="#9a7a48"/><rect x="59.3" y="15" width="2.2" height="3.7" fill="#2a6a9a"/><rect x="61.5" y="15" width="2.3" height="3.7" fill="#3ea642"/><circle cx="62.6" cy="16.5" r="0.8" fill="#f0f4f0"/><rect x="59.3" y="19" width="2.2" height="4" fill="#e0407e"/><rect x="61.5" y="19.5" width="2.3" height="4.5" fill="#e8782a"/><rect x="58.8" y="24" width="5" height="4.5" fill="#a896b6"/><rect x="57" y="27.6" width="7" height="2" fill="#2aa8a0"/><rect x="57" y="29.6" width="7" height="2.5" fill="#d83a30"/><rect x="57" y="32" width="7" height="2" fill="#e8e2dc"/><path d="M48.100 33.500l.4-6 2-3.500 3.500.5-.3 4-1 5z" fill="#f2cab4"/><ellipse cx="54.6" cy="25" rx="3.9" ry="2.9" fill="#efc38e"/><ellipse cx="55.3" cy="24.5" rx="1.9" ry="1.9" fill="#f4ece6"/><ellipse cx="53.8" cy="18.7" rx="5.1" ry="4.6" fill="#f0c48e"/><path d="M50.500 16.800q1.500-1.800 4-1.600 2.500 .2 3 1.600-1.500 1-3.500 1-2.500 0-3.500-1z" fill="#ebe3de"/><ellipse cx="54.3" cy="20.5" rx="3.2" ry="2.2" fill="#f7dcc8"/><ellipse cx="54.8" cy="17.8" rx="1.1" ry="0.9" fill="#28a0d2"/><circle cx="52.6" cy="19.8" r="0.85" fill="#1a1416"/><circle cx="55.8" cy="20.2" r="0.75" fill="#3a2a2a"/><circle cx="53.5" cy="21.5" r="0.7" fill="#ef5a4a"/><circle cx="56.3" cy="21.2" r="0.7" fill="#f08a7a"/><path d="M42.800 34h15.200v6l-4 2-7-1-4.200 2z" fill="#183c2c"/><rect x="58" y="35.3" width="5.7" height="11.2" fill="#d9c2c0"/><rect x="58.5" y="36" width="2" height="2.5" fill="#c83a3a"/><rect x="61" y="38" width="2.5" height="3" fill="#f0ece8"/><rect x="59" y="41.5" width="2" height="3" fill="#c85a6a"/><rect x="61.5" y="43" width="2" height="3" fill="#b8c850"/><circle cx="50.5" cy="37" r="1" fill="#2f6a48"/><circle cx="55.5" cy="35.5" r="0.8" fill="#d8e0dc"/><rect x="43" y="44.2" width="3.3" height="17.4" fill="#f1f1ee"/><rect x="61.9" y="45" width="1.8" height="16.6" fill="#f5f5f1"/><ellipse cx="57.8" cy="57.3" rx="3.7" ry="4.6" fill="#e9c222"/><ellipse cx="54" cy="57.3" rx="4.4" ry="4.2" fill="#eec08a"/><circle cx="55.7" cy="55.8" r="2.6" fill="#f4ece6"/><circle cx="54.5" cy="60.3" r="1.3" fill="#f6c0b4"/><ellipse cx="51.4" cy="49.3" rx="8" ry="7.8" fill="#efc38c"/><path d="M47.200 45.800q1.500-2.600 4.500-2.600t3.800 2q-.5 1.900-4 2.100t-4.300-1.500z" fill="#ebe3de"/><ellipse cx="53" cy="51" rx="4.7" ry="3.5" fill="#f7dcc8"/><ellipse cx="52.8" cy="47.1" rx="1.6" ry="1.3" fill="#2ea6d6"/><ellipse cx="51.7" cy="50.2" rx="1.15" ry="1.3" fill="#1a1416"/><ellipse cx="55.3" cy="48.8" rx="1.05" ry="1.2" fill="#1a1416"/><circle cx="52.4" cy="52.1" r="0.9" fill="#f06a5a"/><circle cx="56.5" cy="50.6" r="0.9" fill="#f07a6a"/><rect x="44.8" y="61.4" width="15.3" height="3.3" fill="#ecd45e"/><rect x="52" y="61.4" width="8.1" height="3.3" fill="#f3ecc4"/><circle cx="62.4" cy="58.3" r="2.2" fill="#f8f8f4"/><circle cx="62.4" cy="57.9" r="0.8" fill="#32a048"/></g></g><rect x="2.700" y="64.400" width="18.700" height="2.400" fill="#e892b2" filter="url(#blur2)"/></svg></div>
<div class="badge act" style="top:556px"></div>
<svg class="abs" style="left:1382px;top:557px" width="20" height="20" viewBox="0 0 20 20"><path d="M3.400 10h13M11.700 5.200l4.800 4.800-4.800 4.800" fill="none" stroke="#4a4a4a" stroke-width="1.5" stroke-linecap="round" stroke-linejoin="round"/></svg>
<div class="row" style="top:608px"></div>
<div class="cb" style="top:639px"></div>
<div class="thumb red" style="top:615px"><svg width="67" height="68" viewBox="0 0 67 68"><rect width="67" height="68" fill="#fff"/><g clip-path="url(#clipR)"><g filter="url(#blur)"><rect x="5" y="0" width="53" height="68" fill="#e9e7e5"/><rect x="5" y="0" width="6" height="68" fill="#f0efee"/><path d="M5.100 1h2.400l1.500 5 2 4 .5 6 1.500 6 2 6 1.500 6 -1 8-3 6-2 10-1 10h-4.400z" fill="#173626"/><path d="M5.100 40h7l1 8-2 8-2 12h-4z" fill="#0b1c12"/><path d="M5.100 17l4.500 0 1.500 4-6 .5z" fill="#dcdce0"/><path d="M5.100 34l10 .5 1.500 5-6 1.500-5.500-1z" fill="#c9cdd1"/><path d="M5.500 12l5.500 1.500" fill="none" stroke="#c9b263" stroke-width="1.6" stroke-linecap="round"/><circle cx="6.5" cy="2.2" r="1.3" fill="#b3943c"/><circle cx="8.3" cy="6.5" r="1" fill="#8a3a9a"/><circle cx="12" cy="23" r="1.6" fill="#c9b060"/><circle cx="10.5" cy="28" r="1.3" fill="#bda654"/><circle cx="12" cy="34.5" r="1.3" fill="#c8ae3c"/><circle cx="9.8" cy="53.4" r="1.1" fill="#d8283a"/><circle cx="7.1" cy="60.7" r="1.5" fill="#d4d6d8"/><circle cx="7" cy="46" r="1" fill="#1f4a30"/><rect x="18.2" y="0" width="39.2" height="62" fill="#5a3c1e"/><rect x="18.7" y="0.9" width="9.8" height="5.8" fill="#f08fb8"/><rect x="28.5" y="0" width="6" height="5.3" fill="#1c1c1c"/><rect x="32" y="1.5" width="3" height="3" fill="#3c8a4c"/><rect x="35" y="0" width="3" height="4.5" fill="#222a24"/><rect x="39.7" y="0" width="17.7" height="4.5" fill="#ecebe9"/><ellipse cx="44.6" cy="1.8" rx="2" ry="2.2" fill="#d8202e"/><ellipse cx="55.2" cy="1.6" rx="1.6" ry="2" fill="#d8283a"/><rect x="49" y="0" width="1.5" height="4" fill="#3a3030"/><rect x="18.2" y="5.5" width="39.2" height="1.3" fill="#8a6a40"/><rect x="19.6" y="7.6" width="8.9" height="11.5" fill="#f1e9e9"/><ellipse cx="22" cy="16" rx="2" ry="2.5" fill="#e8404a"/><ellipse cx="27" cy="10.2" rx="1.6" ry="1.6" fill="#ec4a3a"/><circle cx="25.4" cy="10.7" r="0.8" fill="#1a1416"/><ellipse cx="21" cy="11" rx="1.2" ry="2.5" fill="#e85a4a"/><circle cx="27.2" cy="17.2" r="1.3" fill="#dfe4f0"/><rect x="18.9" y="7.2" width="0.9" height="12" fill="#8a5a30"/><rect x="28.9" y="6.2" width="9.6" height="11.6" fill="#f0dc32"/><rect x="30.5" y="10" width="6" height="6.5" fill="#f3f1ec"/><ellipse cx="31.5" cy="15.8" rx="1.8" ry="2.2" fill="#9fc8ea"/><rect x="31" y="8" width="2" height="1.3" fill="#3a3020"/><rect x="34.5" y="13" width="2.5" height="4" fill="#f2e05a"/><rect x="37.9" y="0" width="1.8" height="20" fill="#7a5832"/><rect x="39.7" y="6.7" width="9.3" height="12" fill="#a9621f"/><ellipse cx="44.5" cy="14.5" rx="1.6" ry="2" fill="#e4dcd4"/><circle cx="44.3" cy="11" r="1" fill="#5a2a10"/><rect x="39.7" y="6.7" width="2" height="3" fill="#5a3a18"/><rect x="49" y="6.7" width="8.3" height="12" fill="#f0cf40"/><ellipse cx="54" cy="11" rx="2.8" ry="3" fill="#f070a2"/><ellipse cx="51.5" cy="15.5" rx="2.5" ry="2" fill="#f27aa8"/><circle cx="51.5" cy="9.5" r="1.8" fill="#f4e060"/><rect x="38.5" y="18.7" width="19" height="1.8" fill="#7a5a30"/><rect x="39.7" y="20.5" width="17.7" height="12" fill="#26262c"/><rect x="41.9" y="21.5" width="4.5" height="10.5" fill="#2858a8"/><ellipse cx="44" cy="29" rx="1.5" ry="1.2" fill="#e8b8a0"/><rect x="46.4" y="21.2" width="8" height="11" fill="#78c030"/><ellipse cx="50.4" cy="24.6" rx="3.1" ry="2.9" fill="#e9ede1"/><ellipse cx="50.4" cy="29" rx="2" ry="2.2" fill="#dfe8d4"/><circle cx="49.4" cy="24.6" r="0.5" fill="#2a2a2a"/><circle cx="51.4" cy="24.6" r="0.5" fill="#2a2a2a"/><rect x="54.4" y="21.5" width="2.9" height="10.5" fill="#2868b8"/><rect x="39.7" y="32.4" width="17.7" height="1.5" fill="#8a6a3a"/><rect x="40" y="34" width="17.4" height="12" fill="#8a7a70"/><rect x="40" y="34" width="6" height="11.6" fill="#e860a2"/><rect x="45.5" y="38" width="4.5" height="7.5" fill="#f0d840"/><rect x="46.5" y="39" width="1.5" height="2.5" fill="#4a8ad8"/><rect x="46.3" y="41.5" width="2.5" height="2.5" fill="#f6f4ee"/><ellipse cx="54" cy="40.7" rx="3.4" ry="5" fill="#a04818"/><rect x="50.5" y="34" width="7" height="3" fill="#4a3428"/><rect x="39" y="45.6" width="18.4" height="2.6" fill="#a8884a"/><rect x="39" y="48.2" width="18.4" height="11" fill="#2e2420"/><rect x="39" y="47.6" width="6.5" height="6" fill="#1c1614"/><ellipse cx="51.3" cy="55.6" rx="5.7" ry="4.7" fill="#e9e5e5"/><ellipse cx="51.7" cy="52.7" rx="1.3" ry="1.6" fill="#c84a6a"/><rect x="47" y="52" width="2" height="3" fill="#f0ecec"/><ellipse cx="44" cy="56.5" rx="3.6" ry="2.5" fill="#e8b8a8"/><path d="M39 58.500l18.400 1.500v2.500l-18.400-1.500z" fill="#8a6a38"/><rect x="40" y="61.5" width="17.4" height="6.5" fill="#101820"/><rect x="40.5" y="63.4" width="8" height="2.6" fill="#c85828"/><rect x="50" y="62.5" width="5" height="1" fill="#2a4a5a"/><rect x="22.7" y="56.3" width="17" height="11.7" fill="#e6e2da"/><rect x="23.5" y="59.5" width="16" height="1.8" fill="#dca83a"/><rect x="23.5" y="62.3" width="16" height="1.6" fill="#e0a844"/><rect x="23.5" y="64.8" width="16" height="1.3" fill="#d8a030"/><rect x="21" y="56.5" width="2" height="9" fill="#3a4a30"/><ellipse cx="28.5" cy="49" rx="11.8" ry="9.5" fill="#f04a1c"/><ellipse cx="37.5" cy="45" rx="4.5" ry="9" fill="#ee4418"/><circle cx="17.8" cy="24.9" r="3.7" fill="#f24d1c"/><circle cx="37.2" cy="23" r="4.6" fill="#f24d1c"/><ellipse cx="28" cy="30" rx="12.5" ry="11.3" fill="#f2481a"/><ellipse cx="28" cy="41" rx="11" ry="4" fill="#ea3f14"/><ellipse cx="29.5" cy="25" rx="2.2" ry="1.8" fill="#b83414"/><circle cx="27" cy="22.5" r="0.9" fill="#c23816"/><circle cx="32" cy="22.8" r="0.8" fill="#c23816"/><circle cx="23.5" cy="28.3" r="0.7" fill="#c23816"/><ellipse cx="28.3" cy="34.8" rx="6.3" ry="4.3" fill="#f7d6ca"/><ellipse cx="29.1" cy="29.7" rx="2.9" ry="1.9" fill="#f4d21e"/><ellipse cx="25.2" cy="33.9" rx="1.7" ry="1.9" fill="#201418"/><ellipse cx="32.9" cy="33.5" rx="1.7" ry="1.9" fill="#201418"/><circle cx="24.7" cy="33.3" r="0.5" fill="#fff"/><circle cx="32.4" cy="32.9" r="0.5" fill="#fff"/><ellipse cx="23.5" cy="36.8" rx="1.3" ry="0.9" fill="#f08a80"/><ellipse cx="33.8" cy="36.5" rx="1.3" ry="0.9" fill="#f08a80"/><ellipse cx="28.8" cy="36.8" rx="0.9" ry="0.6" fill="#e8706a"/><ellipse cx="29.8" cy="50.8" rx="5.4" ry="4.8" fill="#f5f1f1"/><ellipse cx="23.1" cy="52.7" rx="1.2" ry="2.5" fill="#ee4418"/><circle cx="41.3" cy="56.3" r="1.7" fill="#f3c6b2"/><path d="M6.200 68l2.300-6 2.500-6.500 .3-6 1.500-4 3-2.500 3.500 .3 2.500 2 4.500-1.500 4.400-.8 .3 2.300-4.500 2.200-4 2.200 .5 5-1 7-.5 6.300z" fill="#f5ddd2"/><path d="M12.500 46l3-2.500 3.500 .5-2 3-3.500 1.500z" fill="#eec4b4"/><path d="M19.500 58l1.500-5.500 .5 6-1 5z" fill="#e8c2b2"/></g><rect x="57.300" y="0" width="4" height="68" fill="#030303"/></g></svg></div>
<div class="badge act" style="top:638px"></div>
<svg class="abs" style="left:1382px;top:639px" width="20" height="20" viewBox="0 0 20 20"><path d="M3.400 10h13M11.700 5.200l4.800 4.800-4.800 4.800" fill="none" stroke="#4a4a4a" stroke-width="1.5" stroke-linecap="round" stroke-linejoin="round"/></svg>
<div class="row" style="top:690px"></div>
<div class="cb" style="top:721px"></div>
<div class="thumb mixue" style="top:697px"><svg width="67" height="68" viewBox="0 0 67 68"><defs><clipPath id="clipM"><rect x="1" y="5.900" width="64.400" height="37"/></clipPath><linearGradient id="sky" x1="0" y1="0" x2="0" y2="1"><stop offset="0" stop-color="#278de2"/><stop offset=".5" stop-color="#42a8f0"/><stop offset="1" stop-color="#86c8f6"/></linearGradient><linearGradient id="cup" x1="0" y1="0" x2="1" y2="0"><stop offset="0" stop-color="#f4c4a4"/><stop offset=".4" stop-color="#f5b681"/><stop offset="1" stop-color="#f09a3a"/></linearGradient></defs><rect width="67" height="68" fill="#fff"/><rect x="0" y="0" width="67" height="6" fill="#f2f6fa"/><g clip-path="url(#clipM)"><g filter="url(#blur2)"><rect x="1" y="5.9" width="64.4" height="37" fill="url(#sky)"/><path d="M1.700 29l5-4.500 7 0 4.700 5v8h-16.700z" fill="#7cc2f4"/><path d="M4 30l4-3 5 1 2 5-3 4-8 0z" fill="#a8d8f8"/><path d="M6 27l3-1.500 3 1-2 2z" fill="#e4f3fd"/><path d="M50.700 30l5-4 6 0 3.700 4v6h-14.700z" fill="#78c0f4"/><path d="M54 30l4-2.500 4 1 1.500 4-9.500 2z" fill="#a6d6f8"/><path d="M56 28l2.500-1 2.500 1-2 1.500z" fill="#e4f3fd"/><path d="M52 9l5 6 2 8M10 9l-3 7 1 7" stroke="#7cc0f4" stroke-width="1.400" fill="none" opacity=".45"/><ellipse cx="10" cy="43.5" rx="10.5" ry="8.2" fill="#f4d428"/><ellipse cx="9" cy="37.5" rx="7" ry="1.6" fill="#f9ea78"/><ellipse cx="58.5" cy="43.5" rx="9.5" ry="9.2" fill="#f8f0b4"/><ellipse cx="58.5" cy="44.3" rx="8.3" ry="8.3" fill="#f6d838"/><ellipse cx="56" cy="38.5" rx="3" ry="1.2" fill="#fae684"/><path d="M13 5.900h36.800v37h-30.200l-4.900-31.300z" fill="url(#cup)"/><path d="M13 5.900h36.800v4.500q-9 2.600-18.400 2.600t-17.400-2.200z" fill="#d8926e"/><path d="M19 6.500l7 .5 5 3-8 1zM30 6.200l9 .2-4 3.300-4-1zM40 6.500l6 .3-3 2.500z" fill="#cdd08a"/><path d="M21 8l7 1.500M33 7l6 1M25 10.500l5-.5" stroke="#f6f2e6" stroke-width="1.200" fill="none"/><path d="M27.500 20q6-6.500 14-7.500 5-.6 8.300 1v9q-5-1.500-10 .5t-9 6.500z" fill="#f3a338"/><path d="M30 17q6-4 12-4.500" fill="none" stroke="#f8c46a" stroke-width="1"/><path d="M26 29.500l1.600 13.400" stroke="#c9a152" stroke-width="1.200" fill="none"/><path d="M24.500 25.800h3l-.6 4.400h-1.500z" fill="#f0b840"/><path d="M23.400 24.500q-.3-3.500 1.800-4.300 2 1 1.900 4.300l-.6 1.700h-2.500z" fill="#fdfdfb" stroke="#a8905a" stroke-width=".35"/><ellipse cx="35.8" cy="38.8" rx="8.3" ry="6" fill="#f8e4d0" stroke="#7a4a20" stroke-width=".6"/><path d="M29.400 32.500q5.500-2.300 12 0l.6 1.800q-6.500-1.800-13.200 .2z" fill="#d83028"/><path d="M42.600 37.500l1.800 1.500 .3 3.200-1.600-.8z" fill="#d83028"/><path d="M29 36l-1.200 2 .2 4h1.200z" fill="#d83028"/><ellipse cx="34.7" cy="27.4" rx="5.6" ry="4.6" fill="#fcecd8" stroke="#7a4a20" stroke-width=".6"/><path d="M31.600 23.300l.5-2.700 1.300-.9 1.300 .6 1.300-.6 1.300 .9 .5 2.700q-3.100-1-6.200 0z" fill="#f8e0c0" stroke="#7a4a20" stroke-width=".5"/><ellipse cx="32.5" cy="26.4" rx="0.85" ry="1.3" fill="#3848b0"/><ellipse cx="36.4" cy="26.4" rx="0.85" ry="1.3" fill="#3848b0"/><path d="M35.300 27.600h2.400l-1.200 1.400z" fill="#f0902a"/><path d="M31.600 28.700q2.600 2.400 5.400 .2" stroke="#d83028" stroke-width=".8" fill="none"/><circle cx="32.2" cy="28.3" r="0.7" fill="#e84a3a"/></g></g><text x="4.600" y="50.100" font-family="Liberation Sans, sans-serif" font-size="3.700" font-weight="bold" fill="#1e1e1e">Trà Chanh Lô Hội</text><text x="4.600" y="57.100" font-family="Liberation Sans, sans-serif" font-size="3.300" fill="#8a8f96">Hồng trà, thạch dừa, lô hội</text><path d="M5 61.700h.8l.5 2.400h2.200l.5-1.700h-3" fill="none" stroke="#4a4a4a" stroke-width=".5"/><rect x="6.200" y="62.200" width="2.500" height="1.600" fill="#4a4a4a"/><circle cx="6.700" cy="65" r=".4" fill="#4a4a4a"/><circle cx="8.300" cy="65" r=".4" fill="#4a4a4a"/><text x="10.500" y="64.600" font-family="Liberation Sans, sans-serif" font-size="3.200" fill="#9aa0a8">50+ đã bán</text></svg></div>
<div class="badge act" style="top:720px"></div>
<svg class="abs" style="left:1382px;top:721px" width="20" height="20" viewBox="0 0 20 20"><path d="M3.400 10h13M11.700 5.200l4.800 4.800-4.800 4.800" fill="none" stroke="#4a4a4a" stroke-width="1.5" stroke-linecap="round" stroke-linejoin="round"/></svg>
<span class="t med" id="tab1" style="top:41.0px;font-size:14.5px;letter-spacing:0.13px;left:56.0px;">Linked items</span>
<span class="t med" id="tab2" style="top:41.0px;font-size:14.5px;letter-spacing:0.20px;left:170.5px;">Shopify items</span>
<span class="t med" id="tab3" style="top:41.0px;font-size:14.5px;letter-spacing:-0.11px;left:291.7px;">Amazon FBM items</span>
<span class="t" id="srch" style="top:89.5px;font-size:16px;letter-spacing:0.02px;left:74.0px;color:#616161">Search by title or product identifiers</span>
<span class="t" id="addf" style="top:135.5px;font-size:15.5px;letter-spacing:-0.24px;left:48.6px;">Add filter</span>
<span class="t" id="show" style="top:178.6px;font-size:15.5px;letter-spacing:-0.14px;left:40.4px;">Showing: 1-15 of 15</span>
<span class="t" id="left" style="top:178.6px;font-size:15.5px;letter-spacing:0.29px;left:221.8px;">46/1000 Products left</span>
<span class="t sb" id="b1" style="top:192.6px;font-size:14px;letter-spacing:0.29px;left:460.1px;color:#0b4a3c">Send to Amazon</span>
<span class="t sb" style="top:184.3px;font-size:14px;letter-spacing:0.18px;left:493.2px;width:400px;text-align:center;text-indent:0.18px;color:#0b4a3c"><span id="b2a">Send all to</span></span>
<span class="t sb" style="top:202.0px;font-size:14px;letter-spacing:0.25px;left:493.3px;width:400px;text-align:center;text-indent:0.25px;color:#0b4a3c"><span id="b2b">Amazon</span></span>
<span class="t sb" id="b3" style="top:192.6px;font-size:14px;letter-spacing:0.35px;left:818.4px;color:#8e0b21">Disable products</span>
<span class="t sb" style="top:184.3px;font-size:14px;letter-spacing:0.13px;left:853.3px;width:400px;text-align:center;text-indent:0.13px;color:#8e0b21"><span id="b4a">Disable all</span></span>
<span class="t sb" style="top:202.0px;font-size:14px;letter-spacing:0.70px;left:853.2px;width:400px;text-align:center;text-indent:0.70px;color:#8e0b21"><span id="b4b">products</span></span>
<span class="t" id="setp" style="top:178.9px;font-size:15.5px;letter-spacing:0.13px;left:1151.2px;">Set % of products inventory sent to Amazon</span>
<span class="t" id="pct" style="top:206.0px;font-size:15.5px;letter-spacing:-0.71px;left:1416.2px;">100 %</span>
<span class="t sb" id="upd" style="top:192.6px;font-size:14px;letter-spacing:0.59px;left:1489.1px;color:#b5b5b5">Update</span>
<span class="t med" id="h1" style="top:248.9px;font-size:14px;letter-spacing:0.27px;left:112.1px;color:#616161">Image</span>
<span class="t med" id="h2" style="top:248.9px;font-size:14px;letter-spacing:0.72px;left:237.3px;color:#616161">Title</span>
<span class="t med" id="h3" style="top:248.9px;font-size:14px;letter-spacing:0.39px;left:604.7px;color:#616161">Product details</span>
<span class="t med" id="h4" style="top:248.9px;font-size:14px;letter-spacing:0.56px;left:1101.2px;color:#616161">Status</span>
<span class="t med" id="h5" style="top:248.9px;font-size:14px;letter-spacing:0.48px;left:1236.0px;color:#616161">Quantity: Shopify --&gt; Amazon</span>
<span class="t" id="ti0" style="top:310.6px;font-size:15.5px;letter-spacing:-0.39px;left:237.2px;color:#005bd3">ABC@@#&amp;31biwa001 1188%</span>
<span class="t" id="sa0" style="top:299.0px;font-size:15.5px;letter-spacing:-0.14px;left:604.5px;">Shopify SKU:</span>
<span class="t" id="sb0" style="top:299.0px;font-size:15.5px;letter-spacing:-0.34px;left:699.8px;color:#637381">ABC@@#&amp;31biwa001 1188%$</span>
<span class="t" id="sc0" style="top:322.2px;font-size:15.5px;letter-spacing:-0.36px;left:604.5px;">Amazon SKU:</span>
<span class="t" id="sd0" style="top:322.2px;font-size:15.5px;letter-spacing:-0.32px;left:703.2px;color:#637381">ABC@@#&amp;31biwa001 1188%$</span>
<span class="t" id="bd0" style="top:311.0px;font-size:14px;letter-spacing:0.17px;left:1110.6px;color:#4f4700">Disabled</span>
<span class="t" id="qa0" style="top:310.6px;font-size:16px;left:1236.2px;">9</span>
<span class="t" style="top:310.6px;font-size:16px;left:1265.6px;width:400px;text-align:center;"><span id="qb0">9</span></span>
<span class="t" id="ti1" style="top:392.6px;font-size:15.5px;letter-spacing:-1.08px;left:237.2px;color:#005bd3">BBT</span>
<span class="t" id="sa1" style="top:381.0px;font-size:15.5px;letter-spacing:-0.14px;left:604.5px;">Shopify SKU:</span>
<span class="t" id="sb1" style="top:381.0px;font-size:15.5px;letter-spacing:-0.34px;left:699.8px;color:#637381">ABC@@#&amp;31biwa001 1188%$</span>
<span class="t" id="sc1" style="top:404.2px;font-size:15.5px;letter-spacing:-0.36px;left:604.5px;">Amazon SKU:</span>
<span class="t" id="sd1" style="top:404.2px;font-size:15.5px;letter-spacing:-0.32px;left:703.2px;color:#637381">ABC@@#&amp;31biwa001 1188%$</span>
<span class="t" id="bd1" style="top:393.0px;font-size:14px;letter-spacing:0.17px;left:1110.6px;color:#4f4700">Disabled</span>
<span class="t" id="qa1" style="top:392.6px;font-size:16px;left:1236.2px;">9</span>
<span class="t" style="top:392.6px;font-size:16px;left:1265.6px;width:400px;text-align:center;"><span id="qb1">9</span></span>
<span class="t" id="ti2" style="top:474.6px;font-size:15.5px;letter-spacing:-0.20px;left:237.2px;color:#005bd3">BB Three</span>
<span class="t" id="sa2" style="top:463.0px;font-size:15.5px;letter-spacing:-0.14px;left:604.5px;">Shopify SKU:</span>
<span class="t" id="sb2" style="top:463.0px;font-size:15.5px;letter-spacing:-0.34px;left:699.8px;color:#637381">ABC@@#&amp;31biwa001 1188%$</span>
<span class="t" id="sc2" style="top:486.2px;font-size:15.5px;letter-spacing:-0.36px;left:604.5px;">Amazon SKU:</span>
<span class="t" id="sd2" style="top:486.2px;font-size:15.5px;letter-spacing:-0.32px;left:703.2px;color:#637381">ABC@@#&amp;31biwa001 1188%$</span>
<span class="t" id="bd2" style="top:475.0px;font-size:14px;letter-spacing:0.17px;left:1110.6px;color:#4f4700">Disabled</span>
<span class="t" id="qa2" style="top:474.6px;font-size:16px;left:1236.2px;">6</span>
<span class="t" style="top:474.6px;font-size:16px;left:1265.6px;width:400px;text-align:center;"><span id="qb2">6</span></span>
<span class="t" id="ti3" style="top:556.6px;font-size:15.5px;letter-spacing:-1.38px;left:237.2px;color:#005bd3">BNG_1811</span>
<span class="t" id="sa3" style="top:545.0px;font-size:15.5px;letter-spacing:-0.14px;left:604.5px;">Shopify SKU:</span>
<span class="t" id="sb3" style="top:545.0px;font-size:15.5px;letter-spacing:-1.36px;left:699.8px;color:#637381">BNG_1811</span>
<span class="t" id="sc3" style="top:568.2px;font-size:15.5px;letter-spacing:-0.36px;left:604.5px;">Amazon SKU:</span>
<span class="t" id="sd3" style="top:568.2px;font-size:15.5px;letter-spacing:-1.33px;left:703.2px;color:#637381">BNG_1811</span>
<span class="t" id="bd3" style="top:557.0px;font-size:14px;letter-spacing:0.47px;left:1110.3px;color:#014b40">Active</span>
<span class="t" id="qa3" style="top:556.6px;font-size:16px;left:1236.2px;">9</span>
<span class="t" style="top:556.6px;font-size:16px;left:1265.6px;width:400px;text-align:center;"><span id="qb3">9</span></span>
<span class="t" id="ti4" style="top:638.6px;font-size:15.5px;letter-spacing:-1.00px;left:237.2px;color:#005bd3">SET_2911</span>
<span class="t" id="sa4" style="top:627.0px;font-size:15.5px;letter-spacing:-0.14px;left:604.5px;">Shopify SKU:</span>
<span class="t" id="sb4" style="top:627.0px;font-size:15.5px;letter-spacing:-0.60px;left:699.8px;color:#637381">BNG_024</span>
<span class="t" id="sc4" style="top:650.2px;font-size:15.5px;letter-spacing:-0.36px;left:604.5px;">Amazon SKU:</span>
<span class="t" id="sd4" style="top:650.2px;font-size:15.5px;letter-spacing:-0.56px;left:703.2px;color:#637381">BNG_024</span>
<span class="t" id="bd4" style="top:639.0px;font-size:14px;letter-spacing:0.47px;left:1110.3px;color:#014b40">Active</span>
<span class="t" id="qa4" style="top:638.6px;font-size:16px;letter-spacing:-1.40px;left:1236.2px;">10</span>
<span class="t" style="top:638.6px;font-size:16px;letter-spacing:-1.40px;left:1265.6px;width:400px;text-align:center;text-indent:-1.40px;"><span id="qb4">10</span></span>
<span class="t" id="ti5" style="top:720.6px;font-size:15.5px;letter-spacing:-0.01px;left:237.2px;color:#005bd3">MZ-COXJ-D5SC (Copy)</span>
<span class="t" id="sa5" style="top:709.0px;font-size:15.5px;letter-spacing:-0.14px;left:604.5px;">Shopify SKU:</span>
<span class="t" id="sb5" style="top:709.0px;font-size:15.5px;letter-spacing:-1.36px;left:699.8px;color:#637381">BNG_1811</span>
<span class="t" id="sc5" style="top:732.2px;font-size:15.5px;letter-spacing:-0.36px;left:604.5px;">Amazon SKU:</span>
<span class="t" id="sd5" style="top:732.2px;font-size:15.5px;letter-spacing:-1.33px;left:703.2px;color:#637381">BNG_1811</span>
<span class="t" id="bd5" style="top:721.0px;font-size:14px;letter-spacing:0.47px;left:1110.3px;color:#014b40">Active</span>
<span class="t" id="qa5" style="top:720.6px;font-size:16px;left:1236.2px;">0</span>
<span class="t" style="top:720.6px;font-size:16px;left:1265.6px;width:400px;text-align:center;"><span id="qb5">0</span></span>
</div>

</body>
</html>
